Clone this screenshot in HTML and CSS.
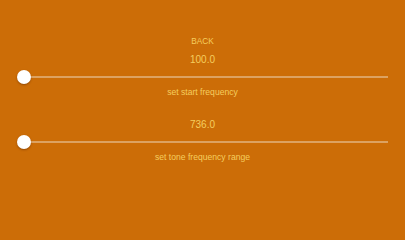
FILE: index.html
```html
<!DOCTYPE html>
<html>
<head>
<meta charset="utf-8">
<link rel="stylesheet" href="styles.css">
</head>
<body>
<div class="screen">
  <div class="back">BACK</div>
  <div class="section">
    <div class="value">100.0</div>
    <div class="slider"><div class="track"></div><div class="thumb"></div></div>
    <div class="label">set start frequency</div>
  </div>
  <div class="section">
    <div class="value">736.0</div>
    <div class="slider"><div class="track"></div><div class="thumb"></div></div>
    <div class="label">set tone frequency range</div>
  </div>
</div>
</body>
</html>
```
FILE: styles.css
```css
html, body {
  margin: 0;
  padding: 0;
  background: #cc6d07;
}
.screen {
  width: 405px;
  height: 228px;
  box-sizing: border-box;
  padding-top: 35px;
  display: flex;
  flex-direction: column;
  align-items: stretch;
  font-family: "Liberation Sans", Arial, sans-serif;
  color: #f5cd5f;
}
.back {
  height: 12px;
  line-height: 12px;
  font-size: 8.3px;
  text-align: center;
}
.section {
  margin-top: 7px;
  display: flex;
  flex-direction: column;
}
.section + .section {
  margin-top: 21px;
}
.value {
  height: 12px;
  line-height: 12px;
  font-size: 10px;
  text-align: center;
}
.slider {
  position: relative;
  height: 16px;
  margin: 3px 17px 0 17px;
}
.track {
  position: absolute;
  left: 7px;
  right: 0;
  top: 7px;
  height: 2px;
  background: #dca262;
}
.thumb {
  position: absolute;
  left: 0;
  top: 1px;
  width: 14px;
  height: 14px;
  border-radius: 50%;
  background: #ffffff;
  box-shadow: 0 1px 2px rgba(80, 30, 0, 0.45);
}
.label {
  margin-top: 1px;
  height: 12px;
  line-height: 12px;
  font-size: 8.6px;
  text-align: center;
}
```
